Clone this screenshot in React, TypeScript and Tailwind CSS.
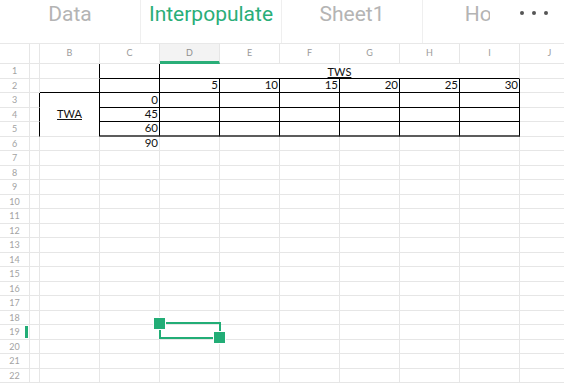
import React from "react";

const COLS = ["A", "B", "C", "D", "E", "F", "G", "H", "I", "J"];

function isBlackRight(r: number, c: string) {
  if (c === "A") return r >= 3 && r <= 5;
  if (c === "B" || c === "C" || c === "I") return r >= 1 && r <= 5;
  if (["D", "E", "F", "G", "H"].includes(c)) return r >= 2 && r <= 5;
  return false;
}

function bottomKind(r: number, c: string): "gray" | "black" | "thick" {
  const inCI = ["C", "D", "E", "F", "G", "H", "I"].includes(c);
  const inBI = c === "B" || inCI;
  if (r === 1 && inCI) return "black";
  if (r === 2 && inBI) return "black";
  if ((r === 3 || r === 4) && inCI) return "black";
  if (r === 5 && inBI) return "thick";
  return "gray";
}

const content: Record<string, string> = {
  D2: "5",
  E2: "10",
  F2: "15",
  G2: "20",
  H2: "25",
  I2: "30",
  C3: "0",
  C4: "45",
  C5: "60",
  C6: "90",
};

function Cell({ r, c }: { r: number; c: string }) {
  const right = isBlackRight(r, c) ? "border-r border-r-black" : "border-r border-r-[#e6e6e6]";
  const bk = bottomKind(r, c);
  const bottom =
    bk === "black"
      ? "border-b border-b-black"
      : bk === "thick"
      ? "border-b-2 border-b-[#5c5c5c]"
      : "border-b border-b-[#e6e6e6]";
  if (r === 1 && c === "D") {
    return (
      <div className={`col-span-6 flex items-end justify-center ${right} ${bottom}`}>
        <span className="text-[11px] leading-[12px] underline underline-offset-1 text-[#111]">TWS</span>
      </div>
    );
  }
  if (r === 3 && c === "B") {
    return (
      <div className={`row-span-3 flex items-center justify-center ${right} ${bottom}`}>
        <span className="text-[11px] leading-[12px] underline underline-offset-1 text-[#111]">TWA</span>
      </div>
    );
  }
  const text = content[`${c}${r}`];
  return (
    <div className={`flex items-center justify-end pr-[1px] overflow-hidden ${right} ${bottom}`}>
      {text ? <span className="text-[11.5px] leading-[12px] text-[#111]">{text}</span> : null}
    </div>
  );
}

export default function App() {
  const rows = Array.from({ length: 22 }, (_, i) => i + 1);
  const tabs = ["Data", "Interpopulate", "Sheet1", "Home"];
  return (
    <div className="w-[564px] h-[385px] overflow-hidden bg-white relative" style={{ fontFamily: "Lato, 'Liberation Sans', sans-serif" }}>
      {/* Tab bar */}
      <div className="h-[44px] flex border-b border-b-[#e8e8e8] relative" style={{ fontFamily: "Roboto, 'Liberation Sans', sans-serif" }}>
        {tabs.map((t, i) => (
          <div
            key={t}
            className={`w-[141px] shrink-0 flex justify-center pt-[1px] border-r border-r-[#efefef] ${i === 1 ? "text-[#2aae78]" : "text-[#b4b4b4]"}`}
          >
            <span className="text-[21px] leading-[27px]">{t}</span>
          </div>
        ))}
        <div className="absolute right-0 top-0 h-[43px] w-[74px] bg-white flex items-start justify-center pt-[11px] gap-[8px] pl-[14px]">
          <span className="w-[4px] h-[4px] rounded-full bg-[#555]" />
          <span className="w-[4px] h-[4px] rounded-full bg-[#555]" />
          <span className="w-[4px] h-[4px] rounded-full bg-[#555]" />
        </div>
      </div>

      {/* Grid */}
      <div className="relative">
        <div className="grid grid-cols-[30px_10px_repeat(9,60px)] grid-rows-[20px_repeat(22,14.5px)] w-[580px]">
          {/* header row */}
          <div className="border-r border-b border-[#e6e6e6]" />
          <div className="border-r border-b border-[#e6e6e6]" />
          {COLS.slice(1).map((c) =>
            c === "D" ? (
              <div
                key={c}
                className="flex items-center justify-center bg-[#f3f3f3] border-r border-r-[#e6e6e6] border-b-[3px] border-b-[#2aae78] text-[9px] text-[#8f8f8f] pt-[1px]"
              >
                {c}
              </div>
            ) : (
              <div
                key={c}
                className="flex items-center justify-center border-r border-b border-[#e6e6e6] text-[9px] text-[#9a9a9a] pb-[1px]"
              >
                {c}
              </div>
            )
          )}
          {rows.map((r) => (
            <React.Fragment key={r}>
              <div className="relative flex items-center justify-center border-r border-b border-[#e6e6e6] text-[9px] text-[#a3a3a3]">
                {r}
                {r === 19 ? <span className="absolute right-[1px] top-[1px] w-[3px] h-[12px] bg-[#22ad76]" /> : null}
              </div>
              {COLS.map((c) => {
                if (c === "A") {
                  const right = isBlackRight(r, c) ? "border-r border-r-black" : "border-r border-r-[#e6e6e6]";
                  return <div key={c} className={`border-b border-b-[#e6e6e6] ${right}`} />;
                }
                if (r === 1 && ["E", "F", "G", "H", "I"].includes(c)) return null;
                if ((r === 4 || r === 5) && c === "B") return null;
                return <Cell key={c} r={r} c={c} />;
              })}
            </React.Fragment>
          ))}
        </div>

        {/* selection overlay on D19 */}
        <div className="absolute left-[159px] top-[278px] w-[62px] h-[17px] border-2 border-[#22ad76]" />
        <div className="absolute left-[153px] top-[273px] w-[13px] h-[13px] bg-[#22ad76] border border-white" />
        <div className="absolute left-[213px] top-[287px] w-[13px] h-[13px] bg-[#22ad76] border border-white" />
      </div>
    </div>
  );
}
